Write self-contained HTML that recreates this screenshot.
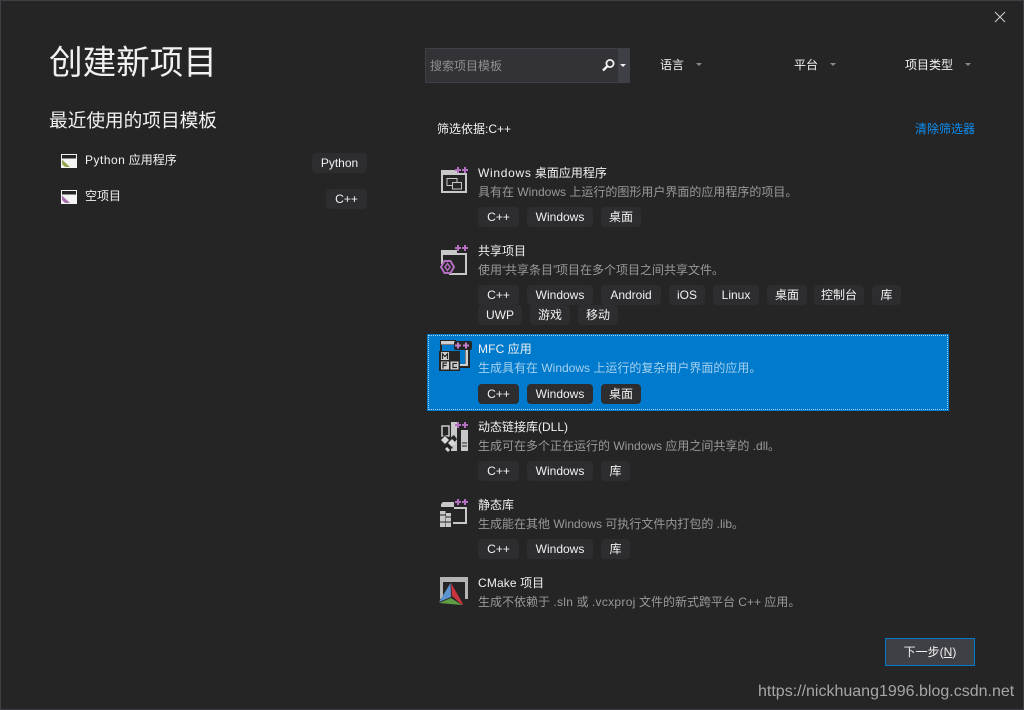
<!DOCTYPE html>
<html lang="zh-CN">
<head>
<meta charset="utf-8">
<title>创建新项目</title>
<style>
html,body{margin:0;padding:0;background:#252526;}
body{width:1024px;height:710px;position:relative;overflow:hidden;font-family:"Liberation Sans","Noto Sans CJK SC",sans-serif;font-size:12px;color:#f1f1f1;}
.t{position:absolute;white-space:nowrap;line-height:18px;height:18px;}
.d{color:#999;}
.tag{position:absolute;height:20px;line-height:20px;background:#2d2d30;border-radius:4px;text-align:center;font-size:12px;color:#f1f1f1;white-space:nowrap;}
svg{position:absolute;overflow:visible;}
.arr{position:absolute;width:0;height:0;border-left:3px solid transparent;border-right:3px solid transparent;border-top:3px solid #8a8a8a;}
.w{letter-spacing:.7px;}
.q{letter-spacing:-1px;}
</style>
</head>
<body>
<!-- window border -->
<div style="position:absolute;left:0;top:0;width:1024px;height:1px;background:#3f3f46"></div>
<div style="position:absolute;left:0;top:0;width:1px;height:710px;background:#3f3f46"></div>
<div style="position:absolute;right:0;top:0;width:1px;height:710px;background:#3f3f46"></div>
<div style="position:absolute;left:0;bottom:0;width:1024px;height:1px;background:#3f3f46"></div>
<svg style="left:994px;top:11px" width="12" height="12"><path d="M1 1L11 11M11 1L1 11" stroke="#d0d0d0" stroke-width="1" fill="none"/></svg>

<!-- left -->
<div class="t" style="left:49px;top:40px;font-size:33.6px;line-height:48px;height:48px;">创建新项目</div>
<div class="t" style="left:49px;top:107px;font-size:18.67px;line-height:28px;height:28px;">最近使用的项目模板</div>

<svg style="left:61px;top:154px" width="16" height="14"><rect x=".5" y=".5" width="15" height="13" fill="#f4f4f4" stroke="#f4f4f4"/><rect x="1" y="1" width="14" height="3.5" fill="#252526"/><path d="M1 5.5L9 13H4L1 10Z" fill="#9aa34e"/></svg>
<svg style="left:61px;top:190px" width="16" height="14"><rect x=".5" y=".5" width="15" height="13" fill="#f4f4f4" stroke="#f4f4f4"/><rect x="1" y="1" width="14" height="3.5" fill="#252526"/><path d="M1 5.5L9 13H4L1 10Z" fill="#a86fae"/></svg>
<div class="t" style="left:85px;top:151px"><span style="letter-spacing:.5px">Python</span> 应用程序</div>
<div class="t" style="left:85px;top:187px">空项目</div>
<div class="tag" style="left:312px;top:153px;width:55px">Python</div>
<div class="tag" style="left:326px;top:189px;width:41px">C++</div>

<!-- search -->
<div style="position:absolute;left:425px;top:48px;width:205px;height:35px;background:#3f3f46"></div>
<div style="position:absolute;left:426px;top:49px;width:192px;height:33px;background:#333337"></div>
<div class="t" style="left:430px;top:57px;color:#8f8f8f">搜索项目模板</div>
<svg style="left:601px;top:58px" width="15" height="15"><circle cx="9" cy="5.5" r="3.6" fill="none" stroke="#f1f1f1" stroke-width="1.8"/><path d="M6.3 8.2L2 12.5" stroke="#f1f1f1" stroke-width="2.4"/></svg>
<div class="arr" style="left:620px;top:64px;border-top-color:#f1f1f1"></div>

<div class="t" style="left:660px;top:56px">语言</div>
<div class="arr" style="left:696px;top:63px"></div>
<div class="t" style="left:794px;top:56px">平台</div>
<div class="arr" style="left:830px;top:63px"></div>
<div class="t" style="left:905px;top:56px">项目类型</div>
<div class="arr" style="left:965px;top:63px"></div>

<div class="t" style="left:437px;top:120px">筛选依据:C++</div>
<div class="t" style="left:915px;top:120px;color:#0e8ff2">清除筛选器</div>

<!-- item 1 -->
<svg style="left:436px;top:160px" width="40" height="40">
<path d="M5 10H21V13H31V33H5Z" fill="#c8c8c8"/><rect x="7" y="15" width="22" height="16" fill="#252526"/>
<rect x="11" y="18.500" width="10" height="7" fill="none" stroke="#c8c8c8"/><rect x="16.500" y="22.500" width="9" height="6.500" fill="#252526" stroke="#c8c8c8"/>
<path d="M19 10H25M22 7V13M26 10H32M29 7V13" stroke="#b56fc0" stroke-width="2" fill="none"/></svg>
<div class="t" style="left:478px;top:164px"><span class="w">Windows</span> 桌面应用程序</div>
<div class="t d" style="left:478px;top:183px">具有在 Windows 上运行的图形用户界面的应用程序的项目。</div>
<div class="tag" style="left:478px;top:207px;width:41px">C++</div>
<div class="tag" style="left:527px;top:207px;width:66px">Windows</div>
<div class="tag" style="left:601px;top:207px;width:40px">桌面</div>

<!-- item 2 -->
<svg style="left:436px;top:240px" width="40" height="40">
<path d="M5 10H21V13H31V35H13V33H29V15H7V24H5Z" fill="#c8c8c8"/>
<path d="M19 8H25M22 5V11M26 8H32M29 5V11" stroke="#b56fc0" stroke-width="2" fill="none"/>
<path d="M8 20H15L19 27L15 34H8L4 27Z" fill="#252526"/>
<path d="M8.500 21H14.500L18 27L14.500 33H8.500L5 27Z" fill="none" stroke="#b56fc0" stroke-width="2"/><path d="M11.500 23.500L9 27L11.500 30.500L14 27Z" fill="none" stroke="#b56fc0" stroke-width="1.500"/></svg>
<div class="t" style="left:478px;top:242px">共享项目</div>
<div class="t d" style="left:478px;top:261px">使用<span class="q">“</span>共享条目<span class="q">”</span>项目在多个项目之间共享文件。</div>
<div class="tag" style="left:478px;top:285px;width:41px">C++</div>
<div class="tag" style="left:527px;top:285px;width:66px">Windows</div>
<div class="tag" style="left:601px;top:285px;width:60px">Android</div>
<div class="tag" style="left:669px;top:285px;width:36px">iOS</div>
<div class="tag" style="left:713px;top:285px;width:46px">Linux</div>
<div class="tag" style="left:767px;top:285px;width:40px">桌面</div>
<div class="tag" style="left:814px;top:285px;width:50px">控制台</div>
<div class="tag" style="left:872px;top:285px;width:29px">库</div>
<div class="tag" style="left:478px;top:305px;width:44px">UWP</div>
<div class="tag" style="left:530px;top:305px;width:40px">游戏</div>
<div class="tag" style="left:578px;top:305px;width:40px">移动</div>

<!-- item 3 selected -->
<div style="position:absolute;left:427px;top:334px;width:522px;height:77px;background:#007acc">
<div style="position:absolute;left:1px;top:1px;right:1px;bottom:1px;border:1px dotted #a9d3f0"></div>
<div class="tag" style="left:51px;top:50px;width:41px">C++</div>
<div class="tag" style="left:100px;top:50px;width:66px">Windows</div>
<div class="tag" style="left:174px;top:50px;width:40px">桌面</div>
</div>
<svg style="left:436px;top:337px" width="40" height="40">
<path d="M4 3H20V5H34V31H22V28H4Z" fill="#252526"/>
<rect x="5" y="4" width="14" height="3.500" fill="#cfcfcf"/>
<path d="M29.500 9H32V29H22V26.500H29.500Z" fill="#cfcfcf"/>
<path d="M6 8H29V27H6Z" fill="#007acc"/>
<rect x="3" y="14" width="21" height="20" fill="#252526"/>
<rect x="5" y="15" width="8" height="8" fill="#cfcfcf"/><rect x="5" y="24.500" width="8" height="8" fill="#cfcfcf"/><rect x="14.500" y="24.500" width="8" height="8" fill="#cfcfcf"/>
<path d="M6.500 22V16.800L9 19.500L11.500 16.800V22M7 31.500V26H11M7 28.500H10.500M21 26.500H17V30.500H21" fill="none" stroke="#252526" stroke-width="1.200"/>
<rect x="18" y="4" width="18" height="9" fill="#252526" rx="2"/>
<path d="M19 8.500H25M22 5.500V11.500M27 8.500H33M30 5.500V11.500" stroke="#c27fcc" stroke-width="2" fill="none"/></svg>
<div class="t" style="left:478px;top:340px"><span style="letter-spacing:.15px">MFC</span> 应用</div>
<div class="t" style="left:478px;top:359px;color:#a5d0ee">生成具有在 Windows 上运行的复杂用户界面的应用。</div>

<!-- item 4 -->
<svg style="left:436px;top:416px" width="40" height="40">
<path d="M6 10H13V20H6Z" fill="none" stroke="#c8c8c8" stroke-width="1.500"/>
<rect x="15" y="6" width="6" height="29" fill="#c8c8c8"/><rect x="25" y="14" width="7" height="21" fill="#c8c8c8"/>
<path d="M26 27H31M26 30H31" stroke="#252526"/>
<path d="M8 19L14 22L18 19L21 23L18 27L16 33L12 30L7 29L4 25Z" fill="#252526"/>
<path d="M5 24L9 20L13 24L9 28ZM12 27L16 23L20 27L16 31ZM11 31L14 34L12 36L9 33Z" fill="#d8d8d8"/>
<path d="M19 9H25M22 6V12M26 9H32M29 6V12" stroke="#b56fc0" stroke-width="2" fill="none"/></svg>
<div class="t" style="left:478px;top:418px">动态链接库(DLL)</div>
<div class="t d" style="left:478px;top:437px">生成可在多个正在运行的 Windows 应用之间共享的 .dll。</div>
<div class="tag" style="left:478px;top:461px;width:41px">C++</div>
<div class="tag" style="left:527px;top:461px;width:66px">Windows</div>
<div class="tag" style="left:601px;top:461px;width:29px">库</div>

<!-- item 5 -->
<svg style="left:436px;top:494px" width="40" height="40">
<path d="M5 13V10L7 8H18V13Z" fill="#c8c8c8"/><path d="M18 13H31V30H17V28H29V15H18Z" fill="#c8c8c8"/>
<rect x="4" y="17" width="5.500" height="16" fill="#c8c8c8"/><rect x="10" y="19" width="5" height="14" fill="#c8c8c8"/>
<path d="M4 21H9.500M4 28H9.500M10 23H15M10 28H15" stroke="#252526"/>
<path d="M19 8H25M22 5V11M26 8H32M29 5V11" stroke="#b56fc0" stroke-width="2" fill="none"/></svg>
<div class="t" style="left:478px;top:496px">静态库</div>
<div class="t d" style="left:478px;top:515px">生成能在其他 Windows 可执行文件内打包的 .lib。</div>
<div class="tag" style="left:478px;top:539px;width:41px">C++</div>
<div class="tag" style="left:527px;top:539px;width:66px">Windows</div>
<div class="tag" style="left:601px;top:539px;width:29px">库</div>

<!-- item 6 -->
<svg style="left:436px;top:572px" width="40" height="40">
<path d="M4 5H32V27H29V10H7V27H4Z" fill="#b4b4b4"/>
<path d="M14.500 11L3 30L15 25Z" fill="#5d94d0"/>
<path d="M15 11L16 24L26 33L27 32Z" fill="#c8353f"/>
<path d="M3 31L15 26L26 33Z" fill="#5f9e45"/></svg>
<div class="t" style="left:478px;top:574px"><span style="letter-spacing:.15px">CMake</span> 项目</div>
<div class="t d" style="left:478px;top:593px">生成不依赖于 <span style="letter-spacing:.3px">.sln</span> 或 <span style="letter-spacing:.3px">.vcxproj</span> 文件的新式跨平台 C++ 应用。</div>

<!-- next button -->
<div style="position:absolute;left:885px;top:638px;width:88px;height:26px;border:1px solid #007acc;background:#3f3f46;text-align:center;line-height:26px;font-size:12px;color:#f1f1f1">下一步(<span style="text-decoration:underline">N</span>)</div>

<div style="position:absolute;left:758px;top:682px;font-family:'Liberation Sans',sans-serif;font-size:16px;line-height:20px;color:#a6a6a6;white-space:nowrap">https://nickhuang1996.blog.csdn.net</div>
</body>
</html>
